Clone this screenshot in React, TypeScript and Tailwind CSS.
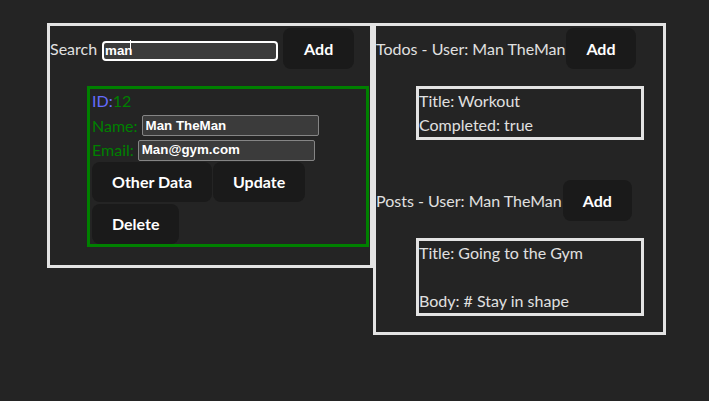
import React from 'react'

const btn =
  'flex items-center justify-center rounded-lg bg-[#1a1a1a] px-[20px] font-bold text-white shrink-0'
const field =
  "h-[21px] w-[177px] rounded-[2px] border border-[#858585] bg-[#3b3b3b] px-[3px] font-['Liberation_Sans',sans-serif] text-[13.33px] font-bold text-white outline-none"

const UserCard: React.FunctionComponent = () => {
  return (
    <ul className="ml-[37px] mt-[16px] mr-[1px] border-[3px] border-[#008000] pl-[2px] text-[#008000]">
      <li className="flex h-[24px] items-center">
        <span className="text-[#646cff]">ID:</span>
        <span>12</span>
      </li>
      <li className="flex h-[25px] items-center">
        <label>Name:</label>
        <input className={`${field} ml-[4px]`} defaultValue="Man TheMan" />
      </li>
      <li className="flex h-[24px] items-center">
        <label>Email:</label>
        <input className={`${field} ml-[4px]`} defaultValue="Man@gym.com" />
      </li>
      <li className="flex flex-wrap gap-x-[1px] gap-y-[2px] w-[274px]">
        <button className={`${btn} h-[40px]`}>Other Data</button>
        <button className={`${btn} h-[40px]`}>Update</button>
        <button className={`${btn} h-[40px]`}>Delete</button>
      </li>
    </ul>
  )
}

const Header: React.FunctionComponent<{ title: string }> = ({ title }) => (
  <div className="flex items-center pt-[2px] pb-[1px]">
    <span>{title}</span>
    <button className={`${btn} ml-[1px] h-[41px]`}>Add</button>
  </div>
)

export default function App() {
  return (
    <div className="flex min-h-screen items-start justify-center bg-[#242424] pl-[4px] pt-[23px] font-['Lato',sans-serif] text-[16px] leading-[24px] text-[#e0e0e0]">
      <div className="h-[245px] w-[326px] border-[3px] border-[#e3e3e3]">
        <div className="flex items-center pt-[2px] pb-[1px]">
          <span>Search</span>
          <div className="relative ml-[5px]">
            <input
              className="h-[20px] w-[176px] rounded-[4px] border-2 border-white bg-[#3b3b3b] px-[1px] font-['Liberation_Sans',sans-serif] text-[13.33px] font-bold text-white outline-none"
              defaultValue="man"
            />
            <span className="absolute left-[28px] top-[3px] h-[14px] w-px bg-white" />
          </div>
          <button className={`${btn} ml-[5px] h-[41px] px-[21px]`}>Add</button>
        </div>
        <UserCard />
      </div>
      <div className="w-[293px] border-[3px] border-[#e3e3e3]">
        <Header title="Todos - User: Man TheMan" />
        <ul className="mb-[16px] ml-[40px] mt-[16px] w-[228px] border-[3px] border-[#e3e3e3]">
          <li>Title: Workout</li>
          <li>Completed: true</li>
        </ul>
        <div className="mt-[38px]">
          <Header title="Posts - User: Man TheMan" />
        </div>
        <ul className="mb-[16px] ml-[40px] mt-[16px] w-[228px] border-[3px] border-[#e3e3e3]">
          <li>Title: Going to the Gym</li>
          <li>&nbsp;</li>
          <li>Body: # Stay in shape</li>
        </ul>
      </div>
    </div>
  )
}
